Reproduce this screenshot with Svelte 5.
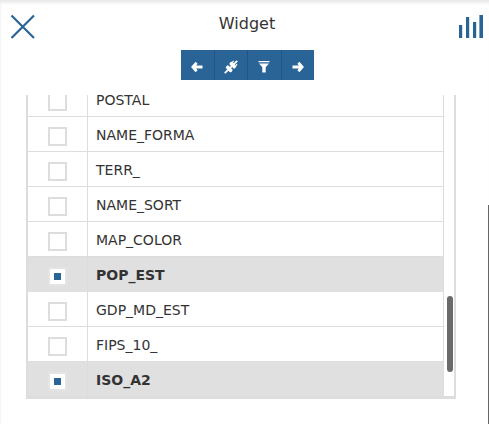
<script>
  const rows = [
    { name: 'POSTAL' },
    { name: 'NAME_FORMA' },
    { name: 'TERR_' },
    { name: 'NAME_SORT' },
    { name: 'MAP_COLOR' },
    { name: 'POP_EST', on: true },
    { name: 'GDP_MD_EST' },
    { name: 'FIPS_10_' },
    { name: 'ISO_A2', on: true }
  ];
</script>

<div class="page">
  <header class="top">
    <svg class="close" width="26" height="26" viewBox="0 0 26 26"><path d="M1.5 1.5 24 24M24 1.5 1.5 24" stroke="#2a6496" stroke-width="2.2" fill="none"/></svg>
    <h1>Widget</h1>
    <svg class="bars" width="26" height="24" viewBox="0 0 26 24"><g fill="#2a6496"><rect x="1" y="10" width="3.2" height="13"/><rect x="8" y="2" width="3.2" height="21"/><rect x="15" y="7" width="3.2" height="16"/><rect x="21.4" y="0" width="3.6" height="23"/></g></svg>
  </header>

  <div class="toolbar">
    <button aria-label="Back"><svg width="14" height="14" viewBox="0 0 14 14"><path d="M6.6 2.8 2.9 7l3.7 4.2M3.2 7H12.5" stroke="#fff" stroke-width="2.8" fill="none"/></svg></button>
    <button aria-label="Connect"><svg width="14" height="14" viewBox="0 0 14 14"><g fill="#fff" transform="rotate(45 7 7)"><rect x="3.3" y="2.6" width="7.4" height="3.6" rx="1.2"/><rect x="3.3" y="7.8" width="7.4" height="3.6" rx="1.2"/><rect x="6.1" y="-1.8" width="1.8" height="17.6"/><rect x="4" y="0.8" width="1.3" height="2"/><rect x="8.7" y="0.8" width="1.3" height="2"/></g></svg></button>
    <button aria-label="Filter"><svg width="14" height="14" viewBox="0 0 14 14"><path d="M1.5 1h11v1.2h-11zM2 3.4h10L8.7 7.2V12.6l-3.4 0V7.2z" fill="#fff"/></svg></button>
    <button aria-label="Next"><svg width="14" height="14" viewBox="0 0 14 14"><path d="M7.4 2.8 11.1 7l-3.7 4.2M10.8 7H1.5" stroke="#fff" stroke-width="2.8" fill="none"/></svg></button>
  </div>

  <div class="list">
    <div class="rows">
      {#each rows as row}
        <div class="row" class:on={row.on}>
          <div class="cell-check"><span class="box"><i></i></span></div>
          <div class="cell-name">{row.name}</div>
        </div>
      {/each}
    </div>
    <div class="thumb"></div>
  </div>
  <div class="edge"></div>
</div>

<style>
  :global(body) { margin: 0; background: #fff; }
  .page {
    position: relative;
    width: 489px;
    height: 424px;
    overflow: hidden;
    box-sizing: border-box;
    font-family: "DejaVu Sans", sans-serif;
    color: #333;
    box-shadow: inset 0 5px 4px -3px #e2e2e2, inset 2px 0 2px -1px #f4f4f4;
  }
  .top {
    display: flex;
    justify-content: space-between;
    align-items: flex-start;
    height: 50px;
    padding: 0 5px 0 10px;
  }
  .close { margin-top: 14px; }
  .bars { margin-top: 15px; }
  h1 {
    margin: 14px 0 0 0;
    font-size: 16px;
    font-weight: 400;
    line-height: 20px;
  }
  .toolbar {
    display: flex;
    width: 133px;
    height: 30px;
    margin-left: 181px;
    background: #2a6496;
  }
  .toolbar button {
    flex: 1;
    display: flex;
    align-items: center;
    justify-content: center;
    padding: 3px 0 0;
    border: 0;
    background: #2a6496;
    border-right: 1px solid #245580;
  }
  .toolbar button:last-child { border-right: 0; }
  .list {
    position: relative;
    box-sizing: border-box;
    width: 430px;
    height: 304px;
    margin: 15px 0 0 26px;
    border: solid #ddd;
    border-width: 0 2px 3px 2px;
    overflow: hidden;
  }
  .rows {
    width: 415px;
    margin-top: -13px;
    border-right: 1px solid #ddd;
  }
  .row {
    display: flex;
    height: 35px;
    box-sizing: border-box;
    border-bottom: 1px solid #ddd;
    font-size: 14px;
  }
  .row.on {
    background: #e0e0e0;
    border-bottom-color: #e0e0e0;
    font-weight: 700;
  }
  .cell-check {
    width: 60px;
    flex: none;
    display: flex;
    align-items: center;
    justify-content: center;
    padding-top: 5px;
    border-right: 1px solid #ddd;
    box-sizing: border-box;
  }
  .row.on .cell-check { border-right-color: #dcdcdc; }
  .box {
    box-sizing: border-box;
    width: 19px;
    height: 19px;
    border: 2px solid #ddd;
    background: #fff;
    display: flex;
    align-items: center;
    justify-content: center;
  }
  .row.on .box { border-color: #e4e4e4; }
  .box i { display: none; }
  .row.on .box i {
    display: block;
    width: 7px;
    height: 7px;
    background: #2a6496;
  }
  .cell-name {
    padding: 1px 0 0 8px;
    line-height: 34px;
  }
  .thumb {
    position: absolute;
    left: 419px;
    top: 201px;
    width: 6px;
    height: 76px;
    background: #6a6a6a;
    border-radius: 3px;
  }
  .edge {
    position: absolute;
    right: 0;
    top: 205px;
    bottom: 0;
    width: 1px;
    background: #666;
  }
</style>
